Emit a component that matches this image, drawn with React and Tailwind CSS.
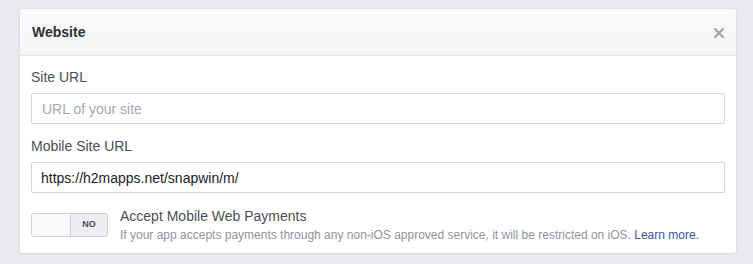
import React from 'react';

const App = () => {
  return (
    <div className="min-h-[264px] bg-[#e9eaed] pt-[9px] pl-[19px]" style={{ fontFamily: '"Liberation Sans", Arial, sans-serif' }}>
      <div className="w-[718px] bg-white rounded-[3px] border border-[#dddfe2] border-t-0 shadow-[0_0_0_1px_#e5e6e9]">
        {/* Header */}
        <div className="h-[47px] flex items-center justify-between px-[12px] bg-gradient-to-b from-[#fafbfc] to-[#f4f5f7] border-b border-[#e5e5e5] rounded-t-[3px]">
          <span className="text-[14px] font-bold text-[#2b2f38] mt-[1px]">Website</span>
          <svg className="w-[10px] h-[10px] mt-[1px]" viewBox="0 0 10 10">
            <path d="M1 1L9 9M9 1L1 9" stroke="#a0a4ab" strokeWidth="2.2" strokeLinecap="square" />
          </svg>
        </div>

        {/* Body */}
        <div className="px-[11px] pt-[12px] pb-[10px]">
          <label className="block text-[14px] text-[#4b4f56] leading-[18px] mb-[7px]">Site URL</label>
          <input
            type="text"
            placeholder="URL of your site"
            className="block w-[694px] h-[31px] px-[10px] text-[14px] text-[#1d2129] border border-[#d3d6db] rounded-[2px] placeholder:text-[#a5a9b0] outline-none"
          />

          <label className="block text-[14px] text-[#4b4f56] leading-[18px] mt-[13px] mb-[7px]">Mobile Site URL</label>
          <input
            type="text"
            defaultValue="https://h2mapps.net/snapwin/m/"
            className="block w-[694px] h-[31px] px-[9px] text-[14px] text-[#1d2129] border border-[#d3d6db] rounded-[2px] outline-none"
          />

          <div className="flex items-start mt-[20px]">
            <div className="flex w-[77px] h-[24px] border border-[#ccd0d5] rounded-[3px] overflow-hidden bg-[#f5f6f7] shrink-0">
              <div className="w-[39px] h-full bg-[#f7f8fa] border-r border-[#ccd0d5]" />
              <div className="flex-1 flex items-center justify-center text-[9px] font-bold text-[#4b4f56] bg-[#eceef1]">NO</div>
            </div>
            <div className="ml-[12px] -mt-[6px]">
              <div className="text-[14px] text-[#4b4f56] leading-[18px]">Accept Mobile Web Payments</div>
              <div className="text-[12px] text-[#90949c] leading-[16px] mt-[2px]">
                If your app accepts payments through any non-iOS approved service, it will be restricted on iOS.{' '}
                <a href="#" className="text-[#365899]">Learn more.</a>
              </div>
            </div>
          </div>
        </div>
      </div>
    </div>
  );
};

export default App;
